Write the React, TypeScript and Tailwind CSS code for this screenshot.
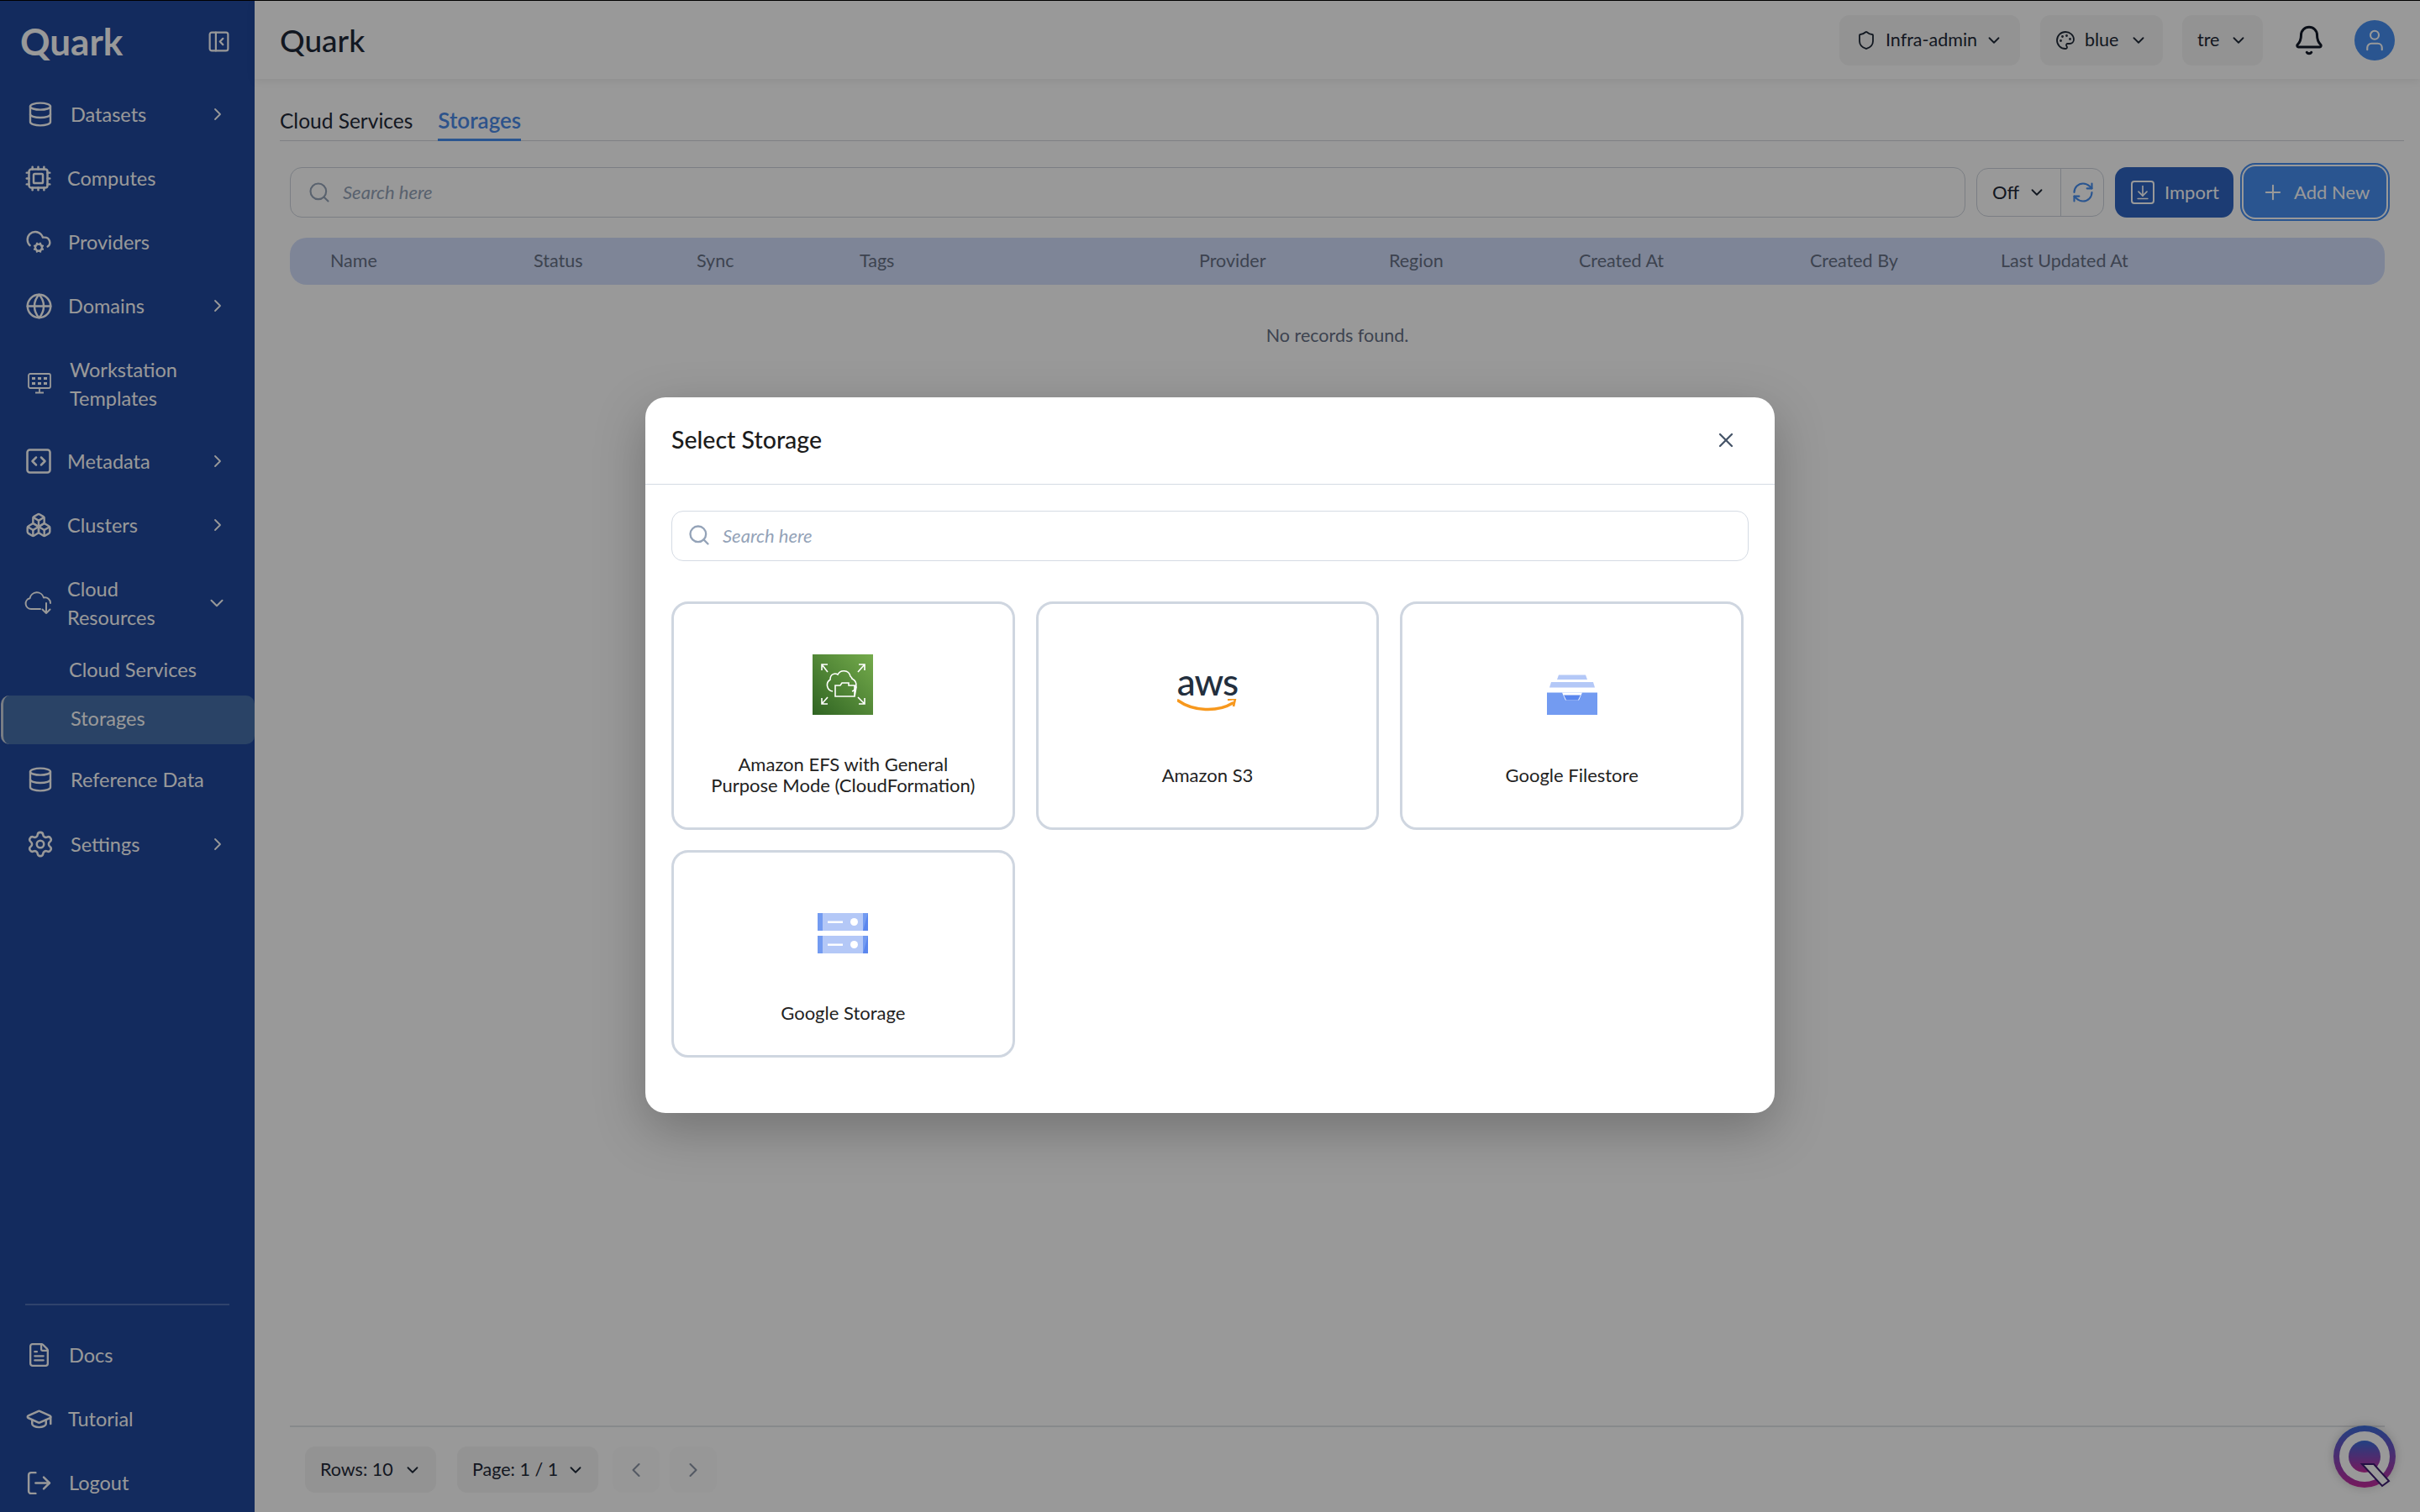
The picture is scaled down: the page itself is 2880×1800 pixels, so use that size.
import {
  ArrowDownToLine,
  Bell,
  Boxes,
  ChevronDown,
  ChevronLeft,
  ChevronRight,
  CloudCog,
  Cpu,
  Database,
  FileText,
  Globe,
  GraduationCap,
  LogOut,
  Palette,
  PanelLeftClose,
  Plus,
  RefreshCw,
  Search,
  Settings,
  Shield,
  SquareCode,
  User,
  X,
} from 'lucide-react';
import type { ReactNode } from 'react';

const FONT = "font-['Lato','Noto_Sans',sans-serif]";

interface NavItem {
  label: ReactNode;
  icon: ReactNode;
  labelClass: string;
  rowClass: string;
  chevron?: 'right' | 'down';
}

const navTop: NavItem[] = [
  { label: 'Datasets', icon: <Database className="ml-[32px] w-[32px] h-[34px]" strokeWidth={1.8} />, labelClass: 'ml-[20px]', rowClass: 'h-[76px]', chevron: 'right' },
  { label: 'Computes', icon: <Cpu className="ml-[29px] w-[33px] h-[33px]" strokeWidth={1.8} />, labelClass: 'ml-[18px]', rowClass: 'h-[76px]' },
  { label: 'Providers', icon: <CloudCog className="ml-[30px] w-[32px] h-[32px]" strokeWidth={1.8} />, labelClass: 'ml-[19px]', rowClass: 'h-[76px]' },
  { label: 'Domains', icon: <Globe className="ml-[30px] w-[33px] h-[33px]" strokeWidth={1.8} />, labelClass: 'ml-[18px]', rowClass: 'h-[76px]', chevron: 'right' },
  {
    label: (
      <>
        Workstation
        <br />
        Templates
      </>
    ),
    icon: <Workstation />,
    labelClass: 'ml-[22px]',
    rowClass: 'h-[109px]',
  },
  { label: 'Metadata', icon: <SquareCode className="ml-[28px] w-[36px] h-[36px]" strokeWidth={1.7} />, labelClass: 'ml-[16px]', rowClass: 'h-[76px]', chevron: 'right' },
  { label: 'Clusters', icon: <Boxes className="ml-[30px] w-[32px] h-[32px]" strokeWidth={1.8} />, labelClass: 'ml-[18px]', rowClass: 'h-[76px]', chevron: 'right' },
  {
    label: (
      <>
        Cloud
        <br />
        Resources
      </>
    ),
    icon: <CloudArrow />,
    labelClass: 'ml-[18px]',
    rowClass: 'h-[110px]',
    chevron: 'down',
  },
];

const navBottom: NavItem[] = [
  { label: 'Docs', icon: <FileText className="ml-[31px] w-[31px] h-[32px]" strokeWidth={1.8} />, labelClass: 'ml-[20px]', rowClass: 'h-[76px]' },
  { label: 'Tutorial', icon: <GraduationCap className="ml-[30px] w-[33px] h-[33px]" strokeWidth={1.8} />, labelClass: 'ml-[18px]', rowClass: 'h-[76px]' },
  { label: 'Logout', icon: <LogOut className="ml-[30px] w-[33px] h-[33px]" strokeWidth={1.8} />, labelClass: 'ml-[19px]', rowClass: 'h-[76px]' },
];

const columns = [
  { label: 'Name', cls: 'w-[242px]' },
  { label: 'Status', cls: 'w-[194px]' },
  { label: 'Sync', cls: 'w-[194px]' },
  { label: 'Tags', cls: 'w-[404px]' },
  { label: 'Provider', cls: 'w-[226px]' },
  { label: 'Region', cls: 'w-[226px]' },
  { label: 'Created At', cls: 'w-[275px]' },
  { label: 'Created By', cls: 'w-[227px]' },
  { label: 'Last Updated At', cls: '' },
];

function Workstation() {
  return (
    <svg viewBox="0 0 28 25" fill="none" stroke="currentColor" strokeWidth="1.8" className="ml-[33px] w-[28px] h-[25px]">
      <rect x="1" y="1" width="26" height="17" rx="2" />
      <path d="M14 18v5M9 23.5h10" />
      <g fill="currentColor" stroke="none">
        <rect x="5" y="5" width="4" height="3" />
        <rect x="12" y="5" width="4" height="3" />
        <rect x="19" y="5" width="4" height="3" />
        <rect x="5" y="11" width="4" height="3" />
        <rect x="12" y="11" width="4" height="3" />
        <rect x="19" y="11" width="4" height="3" />
      </g>
    </svg>
  );
}

function CloudArrow() {
  return (
    <svg viewBox="0 0 33 28" fill="none" stroke="currentColor" strokeWidth="2" strokeLinecap="round" strokeLinejoin="round" className="ml-[29px] w-[33px] h-[28px]">
      <path d="M19 21H8a6.5 6.5 0 0 1-1.5-12.8A8.5 8.5 0 0 1 23 7.5a6.5 6.5 0 0 1 8 6.5" />
      <path d="M26 14v12M21.5 21.5 26 26l4.500-4.500" />
    </svg>
  );
}

function NavRow({ item }: { item: NavItem }) {
  return (
    <div className={`flex items-center pr-[32px] text-white ${item.rowClass}`}>
      {item.icon}
      <span className={`text-[23.5px] leading-[34px] ${item.labelClass}`}>{item.label}</span>
      {item.chevron === 'right' && <ChevronRight className="ml-auto w-[24px] h-[24px]" strokeWidth={1.8} />}
      {item.chevron === 'down' && <ChevronDown className="ml-auto w-[26px] h-[26px]" strokeWidth={1.8} />}
    </div>
  );
}

function Pill({ children, className }: { children: ReactNode; className: string }) {
  return (
    <div className={`flex items-center rounded-[12px] bg-[#f5f5f5] text-[21.5px] text-[#1f2937] ${className}`}>
      {children}
    </div>
  );
}

function EfsIcon() {
  return (
    <svg viewBox="0 0 72 72" className="w-[72px] h-[72px]" fill="none" stroke="#fff" strokeWidth="1.6">
      <defs>
        <linearGradient id="efs" x1="0" y1="1" x2="1" y2="0">
          <stop offset="0" stopColor="#2f6322" />
          <stop offset="1" stopColor="#75ab4c" />
        </linearGradient>
      </defs>
      <rect width="72" height="72" fill="url(#efs)" stroke="none" />
      <path d="M18 21l-7-9M11 19v-7h7M54 21l8-9M55 12h7v7M18 51l-7 8M11 52v7h7M54 51l8 8M62 52v7h-7" />
      <path d="M24 44c-7-1-9-10-3-14 0-7 6-8 9-6 3-6 13-6 15 2 1 1 2 2 2 3 7 3 6 13 0 15" />
      <path d="M27 50V37h6l2-3h8v3h7v13H27zM50 37l2 2-2 11" />
    </svg>
  );
}

function AwsIcon() {
  return (
    <div className="relative w-[72px] h-[72px] flex flex-col items-center">
      <span className="mt-[12px] text-[44px] leading-[40px] font-medium tracking-[-1px] text-[#232f3e]">aws</span>
      <svg viewBox="0 0 72 18" className="w-[72px] h-[18px] mt-[1px]" fill="none">
        <path d="M1 2c18 13 47 14 65 3" stroke="#f7981d" strokeWidth="3.4" strokeLinecap="round" />
        <path d="M60 1l9-1-2 9" stroke="#f7981d" strokeWidth="2.6" />
      </svg>
    </div>
  );
}

function FilestoreIcon() {
  return (
    <div className="w-[72px] h-[72px] flex items-end justify-center">
      <svg viewBox="0 0 60 48" className="w-[60px] h-[48px]">
        <polygon points="14,0.5 46,0.5 48,6 12,6" fill="#b4c8f7" />
        <polygon points="5,9 55,9 57,15.5 3,15.5" fill="#b4c8f7" />
        <rect y="21.5" width="60" height="26.5" fill="#739bf1" />
        <polygon points="18,21.5 42,21.5 38,30.5 22,30.5" fill="#fff" />
        <polygon points="20,24.5 40,24.5 37,30.5 23,30.5" fill="#5a86ee" />
      </svg>
    </div>
  );
}

function StorageIcon() {
  const Row = ({ y }: { y: number }) => (
    <g transform={`translate(0 ${y})`}>
      <rect width="60" height="21" fill="#b4c8f7" />
      <rect width="6" height="21" fill="#739bf1" />
      <rect x="54" width="6" height="21" fill="#739bf1" />
      <polygon points="60,0 60,21 54,21" fill="#5a86ee" />
      <rect x="12" y="9.5" width="18" height="2.4" fill="#fff" />
      <circle cx="43.5" cy="10.5" r="4.5" fill="#fff" />
    </g>
  );
  return (
    <div className="w-[72px] h-[72px] flex items-center justify-center">
      <svg viewBox="0 0 60 48" className="w-[60px] h-[48px]">
        <Row y={0} />
        <Row y={27} />
      </svg>
    </div>
  );
}

function StorageCard({ icon, name }: { icon: ReactNode; name: ReactNode }) {
  return (
    <div className="flex flex-col items-center rounded-[20px] border-[3px] border-[#cfd6e0] pt-[60px] pb-[38px]">
      {icon}
      <div className="flex-1 flex items-center mt-[46px] text-center text-[22px] leading-[25px] text-[#222]">
        {name}
      </div>
    </div>
  );
}

function QuarkBubble() {
  return (
    <div className="absolute right-[29px] bottom-[29px] w-[74px] h-[74px] rounded-full shadow-[0_0_12px_rgba(0,0,0,0.2)]">
      <svg viewBox="0 0 74 74" className="w-[74px] h-[74px]">
        <defs>
          <linearGradient id="qb" x1="0" y1="0" x2="0" y2="1">
            <stop offset="0" stopColor="#3a6cd8" />
            <stop offset="1" stopColor="#c42a9c" />
          </linearGradient>
        </defs>
        <circle cx="37" cy="37" r="37" fill="url(#qb)" />
        <circle cx="37" cy="37" r="30" fill="#fff" />
        <circle cx="37" cy="37" r="19" fill="url(#qb)" />
        <polygon points="34,46 48,46 66,66 58,72" fill="#fff" stroke="#3b1a70" strokeWidth="2" />
      </svg>
    </div>
  );
}

export default function App() {
  return (
    <div className={`relative h-[1800px] w-[2880px] overflow-hidden border-t border-black bg-white ${FONT}`}>
      <div className="flex h-full">
        <aside className="flex h-full w-[303px] shrink-0 flex-col bg-[#20489d] text-white">
          <div className="flex h-[97px] items-center justify-between pl-[24px] pr-[28px]">
            <span className="mb-[2px] text-[44px] font-bold leading-none">Quark</span>
            <PanelLeftClose className="w-[29px] h-[29px]" strokeWidth={1.8} />
          </div>
          {navTop.map((item, i) => (
            <NavRow key={i} item={item} />
          ))}
          <div className="flex h-[50px] items-center pl-[82px] text-[23.5px]">Cloud Services</div>
          <div className="mt-[5px] ml-px flex h-[58px] items-center rounded-[10px] border-l-[3px] border-[#c8d0dc] bg-[#4670aa] pb-[2px] pl-[80px] text-[23.5px]">
            Storages
          </div>
          <div className="mt-[4px]">
            <NavRow item={{ label: 'Reference Data', icon: <Database className="ml-[32px] w-[32px] h-[34px]" strokeWidth={1.8} />, labelClass: 'ml-[20px]', rowClass: 'h-[76px] mb-[1px]' }} />
            <NavRow item={{ label: 'Settings', icon: <Settings className="ml-[31px] w-[34px] h-[34px]" strokeWidth={1.8} />, labelClass: 'ml-[19px]', rowClass: 'h-[76px]', chevron: 'right' }} />
          </div>
          <div className="mt-auto mb-[-3px]">
            <div className="mx-[30px] mb-[21px] h-[2px] bg-[#5070b4]" />
            {navBottom.map((item, i) => (
              <NavRow key={i} item={item} />
            ))}
          </div>
        </aside>

        <main className="flex min-w-0 flex-1 flex-col">
          <header className="flex h-[93px] mb-[2px] shrink-0 items-center pl-[30px] pr-[30px] shadow-[0_2px_10px_rgba(0,0,0,0.08)]">
            <h1 className="text-[37px] font-medium text-[#1f2937]">Quark</h1>
            <div className="ml-auto flex items-center">
              <Pill className="h-[60px] w-[215px] px-[20px]">
                <Shield className="w-[24px] h-[24px]" strokeWidth={1.8} />
                <span className="ml-[11px]">Infra-admin</span>
                <ChevronDown className="ml-auto w-[22px] h-[22px]" strokeWidth={2} />
              </Pill>
              <Pill className="ml-[24px] h-[60px] w-[146px] px-[18px]">
                <Palette className="w-[24px] h-[24px]" strokeWidth={1.8} />
                <span className="ml-[11px]">blue</span>
                <ChevronDown className="ml-auto w-[22px] h-[22px]" strokeWidth={2} />
              </Pill>
              <Pill className="ml-[23px] h-[60px] w-[96px] px-[18px]">
                <span>tre</span>
                <ChevronDown className="ml-auto w-[22px] h-[22px]" strokeWidth={2} />
              </Pill>
              <Bell className="ml-[36px] w-[38px] h-[38px] text-[#111827]" strokeWidth={1.9} />
              <div className="ml-[35px] flex h-[48px] w-[48px] items-center justify-center rounded-full bg-[#468ef0]">
                <User className="w-[30px] h-[30px] text-white" strokeWidth={1.7} />
              </div>
            </div>
          </header>

          <div className="flex min-h-0 flex-1 flex-col pl-[30px] pr-[19px]">
            <div className="mt-[31px] flex h-[41px] gap-[30px] border-b border-[#d4d6dc] text-[24.5px] leading-[34px]">
              <span className="text-[#1f2937]">Cloud Services</span>
              <span className="h-[41px] border-b-[3px] border-[#468ef0] text-[26px] leading-[32px] font-semibold text-[#4c8be8]">Storages</span>
            </div>

            <div className="mt-[30px] ml-[12px] mr-[20px] flex items-center">
              <div className="flex h-[60px] w-[1994px] items-center rounded-[14px] border border-[#cdd3dc] px-[20px]">
                <Search className="w-[28px] h-[28px] text-[#94a3b8]" strokeWidth={1.8} />
                <span className="ml-[14px] text-[22px] italic text-[#94a3b8]">Search here</span>
              </div>
              <div className="ml-[13px] flex h-[58px] w-[152px] items-center rounded-[14px] border border-[#cdd3dc]">
                <div className="flex h-full w-[100px] items-center border-r border-[#cdd3dc] pl-[18px] text-[22px] text-[#1f2937]">
                  Off
                  <ChevronDown className="ml-[10px] w-[22px] h-[22px]" strokeWidth={2} />
                </div>
                <RefreshCw className="ml-[12px] w-[28px] h-[28px] text-[#468ef0]" strokeWidth={1.8} />
              </div>
              <div className="ml-[13px] flex h-[60px] w-[141px] items-center rounded-[14px] bg-[#2f64c1] pl-[19px] text-[22px] text-white">
                <div className="flex h-[28px] w-[28px] items-center justify-center rounded-[4px] border-2 border-white">
                  <ArrowDownToLine className="w-[20px] h-[20px]" strokeWidth={2} />
                </div>
                <span className="ml-[12px]">Import</span>
              </div>
              <div className="ml-[12px] flex h-[61px] w-[170px] items-center rounded-[14px] bg-[#468ef0] pl-[21px] text-[22px] text-white outline outline-[2px] outline-offset-[2px] outline-[#468ef0] ring-2 ring-white">
                <Plus className="w-[28px] h-[28px]" strokeWidth={1.8} />
                <span className="ml-[11px]">Add New</span>
              </div>
            </div>

            <div className="mt-[24px] ml-[12px] mr-[23px] flex h-[56px] items-center rounded-[20px] bg-[#d2defc] pb-[2px] pl-[48px] text-[21.5px] text-[#667085]">
              {columns.map((c) => (
                <span key={c.label} className={`shrink-0 ${c.cls}`}>
                  {c.label}
                </span>
              ))}
            </div>

            <p className="mt-[44px] ml-[12px] mr-[23px] text-center text-[21.5px] text-[#667085]">No records found.</p>

            <div className="mt-auto ml-[12px] mr-[23px] flex h-[103px] items-start border-t-2 border-[#e2e4e8] pt-[23px] pl-[18px]">
              <Pill className="h-[55px] w-[156px] pl-[18px]">
                Rows: 10
                <ChevronDown className="ml-[12px] w-[22px] h-[22px]" strokeWidth={2} />
              </Pill>
              <Pill className="ml-[25px] h-[55px] w-[168px] pl-[18px]">
                Page: 1 / 1
                <ChevronDown className="ml-[10px] w-[22px] h-[22px]" strokeWidth={2} />
              </Pill>
              <div className="ml-[17px] flex h-[55px] w-[56px] items-center justify-center rounded-[12px] bg-[#fcfcfc]">
                <ChevronLeft className="w-[28px] h-[28px] text-[#8a94a6]" strokeWidth={1.8} />
              </div>
              <div className="ml-[12px] flex h-[55px] w-[56px] items-center justify-center rounded-[12px] bg-[#fcfcfc]">
                <ChevronRight className="w-[28px] h-[28px] text-[#8a94a6]" strokeWidth={1.8} />
              </div>
            </div>
          </div>
        </main>
      </div>

      <QuarkBubble />

      <div className="absolute inset-0 flex items-center justify-center bg-black/40 pb-[3px]">
        <div className="w-[1344px] rounded-[24px] bg-white shadow-[0_20px_60px_rgba(0,0,0,0.25)]">
          <div className="flex h-[104px] items-center justify-between border-b-[1.5px] border-[#d5dbe4] pb-[2px] pl-[31px] pr-[44px]">
            <h2 className="text-[28.5px] font-medium text-[#1c1c1c]">Select Storage</h2>
            <X className="w-[28px] h-[28px] text-[#475569]" strokeWidth={2} />
          </div>
          <div className="pl-[31px] pr-[31px] pt-[31px] pb-[66px]">
            <div className="flex h-[60px] items-center rounded-[14px] border-[1.5px] border-[#d5dbe4] pb-[2px] px-[18px]">
              <Search className="w-[28px] h-[28px] text-[#94a3b8]" strokeWidth={2} />
              <span className="ml-[14px] text-[22px] italic text-[#94a3b8]">Search here</span>
            </div>
            <div className="mt-[48px] grid w-[1276px] grid-cols-3 gap-x-[25px] gap-y-[24px]">
              <StorageCard
                icon={<EfsIcon />}
                name={
                  <span>
                    Amazon EFS with General
                    <br />
                    Purpose Mode (CloudFormation)
                  </span>
                }
              />
              <StorageCard icon={<AwsIcon />} name="Amazon S3" />
              <StorageCard icon={<FilestoreIcon />} name="Google Filestore" />
              <StorageCard icon={<StorageIcon />} name="Google Storage" />
            </div>
          </div>
        </div>
      </div>
    </div>
  );
}
